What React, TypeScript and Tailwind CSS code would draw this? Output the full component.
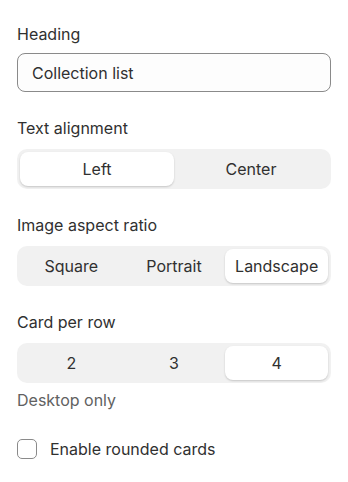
import { useState } from "react";

function Segmented({
  options,
  value,
  onChange,
}: {
  options: string[];
  value: string;
  onChange: (v: string) => void;
}) {
  return (
    <div className="grid auto-cols-fr grid-flow-col rounded-[10px] bg-[#f1f1f1] p-[3px]">
      {options.map((o) => (
        <button
          key={o}
          onClick={() => onChange(o)}
          className={
            o === value
              ? "h-[34px] rounded-[8px] bg-white text-[16px] text-[#303030] shadow-[0_1px_2px_rgba(0,0,0,0.18)]"
              : "h-[34px] rounded-[8px] text-[16px] text-[#303030]"
          }
        >
          {o}
        </button>
      ))}
    </div>
  );
}

export default function App() {
  const [align, setAlign] = useState("Left");
  const [ratio, setRatio] = useState("Landscape");
  const [perRow, setPerRow] = useState("4");
  const [rounded, setRounded] = useState(false);

  return (
    <div className="w-[348px] min-h-[482px] bg-white px-[17px] pt-[24px] font-['Inter',sans-serif] text-[#303030]">
      {/* Heading */}
      <div className="text-[16px] leading-[20px]">Heading</div>
      <input
        defaultValue="Collection list"
        className="mt-[9px] h-[39px] w-full rounded-[8px] border border-[#8a8a8a] bg-[#fdfdfd] px-[14px] text-[16px] text-[#303030] outline-none"
      />

      <div className="mt-[26px] text-[16px] leading-[20px]">Text alignment</div>
      <div className="mt-[11px]">
        <Segmented options={["Left", "Center"]} value={align} onChange={setAlign} />
      </div>

      <div className="mt-[26px] text-[16px] leading-[20px]">Image aspect ratio</div>
      <div className="mt-[11px]">
        <Segmented
          options={["Square", "Portrait", "Landscape"]}
          value={ratio}
          onChange={setRatio}
        />
      </div>

      <div className="mt-[26px] text-[16px] leading-[20px]">Card per row</div>
      <div className="mt-[11px]">
        <Segmented options={["2", "3", "4"]} value={perRow} onChange={setPerRow} />
      </div>
      <div className="mt-[7px] text-[16px] leading-[20px] text-[#616161]">Desktop only</div>

      <label className="mt-[29px] flex items-center gap-[13px]">
        <span
          onClick={() => setRounded(!rounded)}
          className={
            rounded
              ? "h-[20px] w-[20px] rounded-[5px] border border-[#303030] bg-[#303030]"
              : "h-[20px] w-[20px] rounded-[5px] border border-[#8a8a8a] bg-white"
          }
        />
        <span className="text-[16px] leading-[20px]">Enable rounded cards</span>
      </label>
    </div>
  );
}
